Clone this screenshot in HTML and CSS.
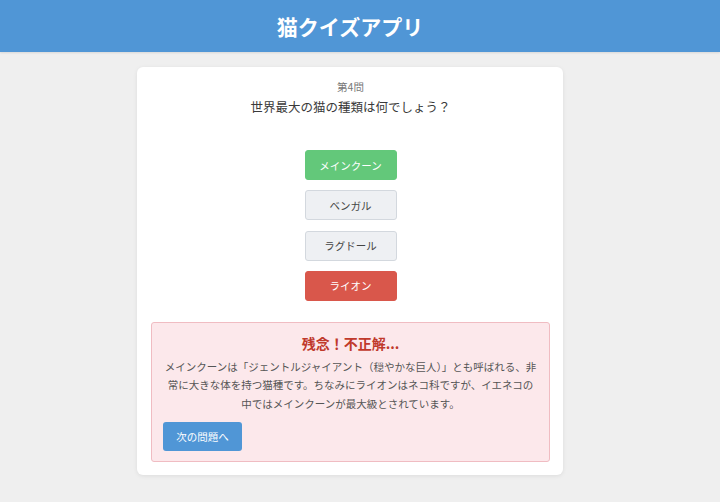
FILE: index.html
```html
<!DOCTYPE html>
<html lang="ja">
<head>
  <title>猫クイズアプリ</title>
  <meta charset="utf-8">
  <meta name="viewport" content="width=device-width, initial-scale=1">
  <link rel="stylesheet" href="styles.css">
</head>
<body>
  <header class="header">
    <h1 class="header-title">猫クイズアプリ</h1>
  </header>
  <main class="main">
    <section class="card">
      <p class="quiz-number">第4問</p>
      <h2 class="quiz-question">世界最大の猫の種類は何でしょう？</h2>
      <div class="choices">
        <button class="choice choice-correct">メインクーン</button>
        <button class="choice">ベンガル</button>
        <button class="choice">ラグドール</button>
        <button class="choice choice-wrong">ライオン</button>
      </div>
      <div class="result result-wrong">
        <h3 class="result-title">残念！不正解...</h3>
        <p class="result-text">メインクーンは「ジェントルジャイアント（穏やかな巨人）」とも呼ばれる、非常に大きな体を持つ猫種です。ちなみにライオンはネコ科ですが、イエネコの中ではメインクーンが最大級とされています。</p>
        <button class="button-next">次の問題へ</button>
      </div>
    </section>
  </main>
</body>
</html>
```

FILE: styles.css
```css
*, *::before, *::after {
  margin: 0;
  padding: 0;
  box-sizing: border-box;
}

body {
  min-height: 100vh;
  background-color: #efefef;
  color: #444444;
  font-family: "Noto Sans CJK JP", "Noto Sans", sans-serif;
}

.header {
  height: 52px;
  padding-right: 20px;
  display: flex;
  justify-content: center;
  align-items: center;
  background-color: #5096d6;
  box-shadow: 0 1px 2px rgba(0, 0, 0, 0.1);
}

.header-title {
  color: #ffffff;
  font-size: 21px;
  font-weight: 700;
  line-height: 1;
}

.main {
  padding: 15px 20px 0 0;
}

.card {
  width: 426px;
  margin: 0 auto;
  padding: 13px 13px 13px 14px;
  background-color: #ffffff;
  border-radius: 6px;
  box-shadow: 0 1px 4px rgba(0, 0, 0, 0.08);
  text-align: center;
}

.quiz-number {
  font-size: 10.5px;
  line-height: 14px;
  color: #777777;
}

.quiz-question {
  margin-top: 2px;
  font-size: 12.5px;
  font-weight: 400;
  line-height: 22px;
  color: #3a3a3a;
}

.choices {
  display: flex;
  flex-direction: column;
  align-items: center;
  gap: 10.3px;
  margin-top: 32px;
}

.choice {
  width: 92px;
  height: 30px;
  border: 1px solid #d3d8de;
  border-radius: 3px;
  background-color: #eef0f3;
  color: #444444;
  font-family: inherit;
  font-size: 10.5px;
}

.choice-correct {
  border-color: #63c87a;
  background-color: #63c87a;
  color: #ffffff;
}

.choice-wrong {
  border-color: #d9574b;
  background-color: #d9574b;
  color: #ffffff;
}

.result {
  margin-top: 21px;
  padding: 10px 11px 10px 11px;
  border: 1px solid #f0bcc2;
  border-radius: 3px;
  text-align: center;
}

.result-wrong {
  background-color: #fce8eb;
}

.result-title {
  font-size: 14px;
  font-weight: 700;
  line-height: 20px;
  color: #c0392b;
}

.result-text {
  margin-top: 5px;
  font-size: 10.5px;
  line-height: 18.5px;
  color: #555555;
}

.button-next {
  display: block;
  width: 79px;
  height: 29px;
  margin-top: 9px;
  border: none;
  border-radius: 3px;
  background-color: #5096d6;
  color: #ffffff;
  font-family: inherit;
  font-size: 10.5px;
}
```
